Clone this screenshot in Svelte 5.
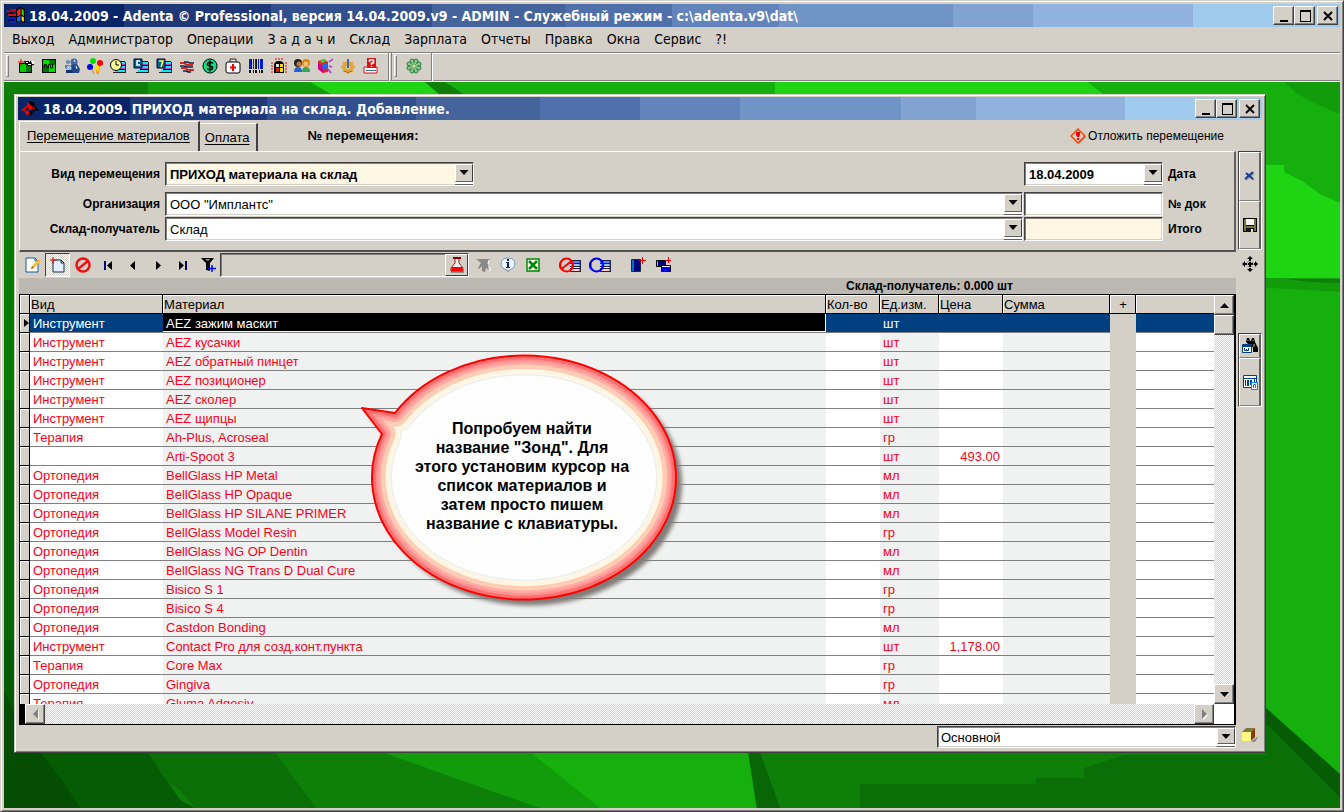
<script>
  const menu = ['Выход', 'Администратор', 'Операции', 'З а д а ч и', 'Склад', 'Зарплата', 'Отчеты', 'Правка', 'Окна', 'Сервис', '?!'];

  const list = '<path d="M7 3h8v12H7z" fill="#008"/><path d="M7 4h8v2H7zM7 8h8v2H7zM5 12h10v2H5z" fill="#0ee"/><path d="M7 6h8v1H7zM7 10h8v1H7z" fill="#c3c"/><path d="M3 14h12v1H3zM15 4h1v11h-1z" fill="#222"/>';
  const sheet = '<path d="M8 3h8v12H8z" fill="#224"/><path d="M8 4h7v2H8z" fill="#58f"/><path d="M8 7h7v2H8z" fill="#9cf"/><path d="M8 10h7v1H8z" fill="#fff"/><path d="M8 12h7v2H8z" fill="#fcc"/>';

  const icons = {
    flag: '<path d="M8 2l4-2 4 2v12l-4-2-4 2z" fill="#000"/><path d="M9 3l3-2v6l-3 1z" fill="#f22"/><path d="M13 1l2 2v5l-2-1z" fill="#2c2"/><path d="M9 9l3-1v4l-3 1z" fill="#26f"/><path d="M13 8l2 1v4l-2-1z" fill="#fd0"/><path d="M0 3h2v2H0zM3 2h5v2H3zM1 6h7v2H1z" fill="#c11"/><path d="M0 9h8v2H0zM2 12h6v2H2z" fill="#12c"/><path d="M0 5h6v1H0zM2 8h6v1H2zM1 11h6v1H1z" fill="#000"/>',
    adenta: '<path d="M0 9l5-4 1-3 3 2 3 4-3 1-2-1-1 2 2 1-2 3-2-2-1-2z" fill="#e00"/><path d="M7 1l5 1v3l4 4-5 1-2 4-2-1 1-3 3-1 1-2-4-3z" fill="#000"/><path d="M11 5l2 2-2 2-2-1z" fill="#900"/><path d="M3 9l3-3 1 1-2 3z" fill="#400"/>',
    green: '<path d="M1 5h13v10H1z" fill="#070"/><path d="M2 6h6v8H2z" fill="#0c0"/><path d="M6 3h10v4l-5 1-4-2z" fill="#000"/><path d="M8 4h2v1H8zM10 5h3v2h-3zM13 3h3v3h-2zM11 3h1v1h-1z" fill="#fff"/><path d="M3 1v7M0 4h6" stroke="#f00"/><path d="M1.500 5.500h12v9h-12z" fill="none" stroke="#000"/>',
    chart: '<path d="M1 1h14v14H1z" fill="#000"/><path d="M2 2h12v12H2z" fill="#070"/><path d="M2 2h6v5H2zM8 7h6v7H8z" fill="#0d0"/><path d="M3.500 10V6.500h2V10h2V6.500h2V10h2V6" stroke="#020" fill="none"/>',
    people: '<circle cx="10" cy="4" r="3.500" fill="#46a"/><path d="M7 7l6-1 3 5-1 4H7z" fill="#248"/><circle cx="4" cy="4" r="2" fill="#68b"/><path d="M1 7h5l2 4-3 1-4-2z" fill="#57a"/><circle cx="5" cy="10" r="2.500" fill="#9bd"/><path d="M2 12h6l1 3H2z" fill="#136"/><path d="M10 2l1 2M12 8l1 3M4 9l1 1" stroke="#dff"/>',
    balloons: '<path d="M9 8l1 8M5 11l2 5M13 8l-2 8" stroke="#e80" fill="none"/><circle cx="6" cy="3" r="3" fill="#0d0"/><circle cx="13" cy="5" r="3" fill="#f00"/><circle cx="3" cy="9" r="3" fill="#00e"/><circle cx="10" cy="10" r="2.500" fill="#fd0"/>',
    clock: list + '<circle cx="6" cy="7" r="5.500" fill="#ff9" stroke="#000"/><path d="M6 3v4h3" fill="none" stroke="#000"/>',
    tableC: list + '<path d="M1 1h8v9H1z" fill="#068" stroke="#003"/><path d="M7 3H4v4h3" fill="none" stroke="#fff" stroke-width="1.500"/>',
    table7: list + '<path d="M1 1h8v9H1z" fill="#068" stroke="#003"/><path d="M3 3h4L5 9" fill="none" stroke="#ff5" stroke-width="1.500"/>',
    flow: '<path d="M1 5h4l3 2h6M2 10h4l3 2h6" fill="none" stroke="#d22" stroke-width="2"/><path d="M5 4h3l3 1h4M1 8h4l3 1h6M4 13h3l2 1h3" fill="none" stroke="#124" stroke-width="1.500"/>',
    dollar: '<circle cx="8" cy="8" r="7" fill="#1d8" stroke="#000"/><path d="M11 5.500Q8 3 6 5t2 3 2 3-5-.5M8 2.500v11" fill="none" stroke="#000" stroke-width="1.500"/>',
    medical: '<path d="M5 4V1h6v3" fill="none" stroke="#333"/><rect x="1" y="4" width="14" height="11" rx="2" fill="#fff" stroke="#000"/><path d="M8 6v7M5 9.500h6" stroke="#e00" stroke-width="2"/>',
    barcode: '<path d="M1 1h3v10H1zM5 1h1v10H5zM7 1h2v10H7zM10 1h1v10h-1zM12 1h3v10h-3z" fill="#02c"/><path d="M3 1h1v10H3zM8 1h1v10H8zM13 1h1v10h-1zM1 12h2v3H1zM5 12h1v3H5zM7 12h2v3H7zM11 12h1v3h-1zM13 12h2v3h-2z" fill="#111"/>',
    window: '<path d="M3 15V7q0-4 5-4t5 4v8z" fill="#000"/><path d="M5 6h3v3H5z" fill="#ddd"/><path d="M9 6h3v3H9z" fill="#fd0"/><path d="M5 10h3v4H5z" fill="#c20"/><path d="M9 10h3v4H9z" fill="#fd0"/><path d="M1 4v11M15 4v11M4 1h8" stroke="#e00" stroke-dasharray="2 1"/>',
    users: '<circle cx="4" cy="5" r="4" fill="#222"/><circle cx="5" cy="6" r="2.500" fill="#b74"/><path d="M0 14q0-5 4-5t4 5z" fill="#26c"/><circle cx="12" cy="5" r="4" fill="#d80"/><circle cx="12" cy="6" r="2.500" fill="#fb7"/><path d="M8 14q0-5 4-5t4 5z" fill="#3a5"/>',
    cube: '<path d="M1 3l6-2 4 3v10l-5 1-5-4z" fill="#e22"/><path d="M1 5l5 3v7l-5-4z" fill="#c08"/><path d="M5 7l6-3v6l-5 2z" fill="#26e"/><path d="M3 3l4-2 2 2-4 2z" fill="#3d3"/><path d="M12 4l4-3M12 8l3 1M11 11l3 4" stroke="#a3d" stroke-width="1.500"/>',
    gear: '<circle cx="8" cy="9" r="4.500" fill="none" stroke="#e2a83c" stroke-width="3"/><path d="M8 2v14M1 9h14M3 4l10 10M13 4L3 14" stroke="#e2a83c" stroke-width="2"/><circle cx="8" cy="9" r="2" fill="#d4d0c8"/><path d="M8 1v9" stroke="#46a" stroke-width="2"/><path d="M4 13q4 3 8 0" fill="none" stroke="#a67018"/>',
    help: '<path d="M1 9h13v6H1z" fill="#fff" stroke="#d11"/><path d="M4 0h9v10H4z" fill="#d11"/><path d="M6.500 4V2h4v3h-2v2M8.500 8v1" fill="none" stroke="#fff" stroke-width="1.500"/><path d="M3 12.500h10" stroke="#36a"/>',
    flower: '<g fill="#8dcc8d" stroke="#2d7a45"><circle cx="6" cy="3" r="2"/><circle cx="10" cy="3" r="2"/><circle cx="13" cy="6" r="2"/><circle cx="13" cy="10" r="2"/><circle cx="10" cy="13" r="2"/><circle cx="6" cy="13" r="2"/><circle cx="3" cy="10" r="2"/><circle cx="3" cy="6" r="2"/></g><circle cx="8" cy="8" r="4" fill="#8dcc8d"/><path d="M4 4l8 8M12 4l-8 8M8 2v12M2 8h12" stroke="#2d7a45" stroke-width=".6"/><circle cx="8" cy="8" r="1.500" fill="#dd8"/>',
    edit: '<path d="M1 1h9l3 3v11H1z" fill="#fff" stroke="#135a9a"/><path d="M10 1v3h3" fill="none" stroke="#135a9a"/><path d="M6 12l1-3 7-7 2 2-7 7z" fill="#fb3"/><path d="M6 12l1-3 2 2z" fill="#a62"/>',
    add: '<path d="M3 3h8l3 3v9H3z" fill="#e4f0ff" stroke="#035"/><path d="M11 3v3h3" fill="none" stroke="#035"/><path d="M3 0v7M0 3h7" stroke="#e00"/>',
    ban: '<circle cx="8" cy="8" r="6.500" fill="none" stroke="#e11" stroke-width="2.500"/><path d="M13 4L3 12" stroke="#e11" stroke-width="2.500"/>',
    first: '<path d="M4 4h2v9H4z" fill="#000080"/><path d="M12 4v9L7 8.500z" fill="#000"/>',
    prev: '<path d="M10 4v9L5 8.500z" fill="#000"/>',
    next: '<path d="M6 4v9l5-4.500z" fill="#000"/>',
    last: '<path d="M10 4h2v9h-2z" fill="#000080"/><path d="M4 4v9l5-4.500z" fill="#000"/>',
    filter: '<path d="M1 1h13l-4 5v8l-4-1V6z" fill="#000"/><path d="M5 2h5L8 4z" fill="#999"/><path d="M12 8v7M8 11.500h8" stroke="#00f" stroke-width="1.500"/>',
    flask: '<path d="M6 2v4l-4 5v3h12v-3l-4-5V2" fill="#eee" stroke="#822"/><path d="M3 10h10l1 4H2z" fill="#f00"/><path d="M2 15h13" stroke="#555"/><path d="M4 0h8v2H4z" fill="#800"/>',
    nofilter: '<path d="M1 2h14l-2 3v5l1 3-3-2-1 4-3-1V9l-3 3-1-1 3-5z" fill="#888"/><path d="M14 3l-1 4M15 10v4" stroke="#fff"/>',
    info: '<path d="M8 1q7 0 7 6 0 4-5 6l-2 2v-2Q1 12 1 7q0-6 7-6z" fill="#eaf5ff" stroke="#79b"/><path d="M7 2h2v2H7zM6 5h3v5h1v1H6v-1h1V6H6z" fill="#126"/>',
    excel: '<path d="M2 2h12v12H2z" fill="#fff" stroke="#080" stroke-width="1.500"/><path d="M4 4l8 8M12 4l-8 8" stroke="#080" stroke-width="2.500"/>',
    box: '<path d="M1.500 2.500h9v12h-9z" fill="#000080" stroke="#224"/><path d="M3 3v11" stroke="#0df"/><path d="M12.500 0v7M9 3.500h7" stroke="#e00"/>',
    boxes: '<path d="M1.500 3.500h9v6h-9z" fill="#000080" stroke="#000"/><path d="M2.500 4v5" stroke="#0df"/><path d="M6.500 8.500h9v6h-9z" fill="#00f" stroke="#000"/><path d="M7 9.500h8" stroke="#fff"/><path d="M13.500 0v6M10 3.500h6" stroke="#e00"/>',
    delay: '<path d="M8 1l8 8-7 7z" fill="#888"/><path d="M8 1l7 7-7 7-7-7z" fill="#d4d0c8" stroke="#f40" stroke-width="1.500"/><path d="M6 4h4v3l-1 2H7L6 7zM7 10h2v2H7z" fill="#f00"/>',
    close: '<path d="M5 6l7 6M12 5l-8 7" stroke="#999" stroke-width="2"/><path d="M4 5l7 6M11 4l-8 7" stroke="#1c3c90" stroke-width="2"/>',
    save: '<path d="M1 1h14v14H1z" fill="#000"/><path d="M2 2h2v12H2zM12 2h2v12h-2zM3 9h10v2H3z" fill="#77723c"/><path d="M4 2h8v6H4z" fill="#f4f4f4"/><path d="M5 11h7v4H5z" fill="#111"/><path d="M9 12h2v3H9z" fill="#ddd"/>',
    move: '<path d="M8 0l3 3H5zM8 16l3-3H5zM0 8l3-3v6zM16 8l-3-3v6z" fill="#000"/><path d="M8 3v10M3 8h10" stroke="#000" stroke-width="2" stroke-dasharray="2 1"/><circle cx="8" cy="8" r="3" fill="none" stroke="#555" stroke-dasharray="1 1"/><path d="M7 7h2v2H7z" fill="#000"/>',
    find: '<path d="M4 4l1-4h2l1 3h1l1-3h2l1 4 3 6v4h-5V9H9z" fill="#000"/><path d="M6 2v1M11 2v1M12 6v3" stroke="#bbb"/><path d="M.5 6.500h9v8h-9z" fill="#fff" stroke="#004080"/><path d="M0 8h10" stroke="#004080" stroke-width="2"/><path d="M2.500 10v2.500h2V11v1.500h2V10" fill="none" stroke="#004080"/>',
    grid: '<path d="M1.500 1.500h13v12h-13z" fill="#fff" stroke="#004080"/><path d="M1 4h14v1H1zM3 6h1v6H3zM5 6h2v6H5zM8 6h2v5H8zM12 5h1v3h-1z" fill="#004080"/><path d="M9.500 8.500h6v7h-6z" fill="#fff" stroke="#08f"/><path d="M11.500 14v-3.500h2V14" fill="none" stroke="#08f"/>',
    brick: '<path d="M9 15l6-5h1l-3 5z" fill="#888"/><path d="M0 5l4-4h9l-4 4z" fill="#7c7a3c"/><path d="M0 5h9v9H0z" fill="#fff880"/><path d="M9 5l4-4v9l-4 4z" fill="#843c00"/>',
    banlist: sheet + '<ellipse cx="5.500" cy="8" rx="4.700" ry="6.500" fill="none" stroke="#f00" stroke-width="1.800"/><path d="M9 4l-7 8" stroke="#f00" stroke-width="1.800"/>',
    ringlist: sheet + '<ellipse cx="5.500" cy="8" rx="4.700" ry="6.500" fill="none" stroke="#00f" stroke-width="1.800"/>',
    min: '<path d="M4 12h8v2H4z" fill="#000"/>',
    max: '<path d="M3 2h11v12H3zM4 4v9h9V4z" fill="#000" fill-rule="evenodd"/>',
    cross: '<path d="M4 4l8 8M12 4l-8 8" stroke="#000" stroke-width="2"/>'
  };

  const mainTools = [
    ['green', 'Настройки'], ['chart', 'График'], ['people', 'Пациенты'], ['balloons', 'Дни рождения'],
    ['clock', 'Расписание'], ['tableC', 'Смены'], ['table7', 'Неделя'], ['flow', 'Потоки'],
    ['dollar', 'Оплата'], ['medical', 'Лечение'], ['barcode', 'Штрихкод'], ['window', 'Касса'],
    ['users', 'Сотрудники'], ['cube', 'Склад'], ['gear', 'Сервис'], ['help', 'Справка']
  ];

  const k = 'Инструмент', o = 'Ортопедия', t = 'Терапия';
  const rows = [
    [k, 'AEZ зажим маскит', 'шт', ''], [k, 'AEZ кусачки', 'шт', ''], [k, 'AEZ обратный пинцет', 'шт', ''],
    [k, 'AEZ позиционер', 'шт', ''], [k, 'AEZ сколер', 'шт', ''], [k, 'AEZ щипцы', 'шт', ''],
    [t, 'Ah-Plus, Acroseal', 'гр', ''], ['', 'Arti-Spoot 3', 'шт', '493.00'], [o, 'BellGlass HP Metal', 'мл', ''],
    [o, 'BellGlass HP Opaque', 'мл', ''], [o, 'BellGlass HP SILANE PRIMER', 'мл', ''], [o, 'BellGlass Model Resin', 'гр', ''],
    [o, 'BellGlass NG OP Dentin', 'мл', ''], [o, 'BellGlass NG Trans D Dual Cure', 'мл', ''], [o, 'Bisico S 1', 'гр', ''],
    [o, 'Bisico S 4', 'гр', ''], [o, 'Castdon Bonding', 'мл', ''], [k, 'Contact Pro для созд.конт.пункта', 'шт', '1,178.00'],
    [t, 'Core Max', 'гр', ''], [o, 'Gingiva', 'гр', ''], [t, 'Gluma Adgesiv', 'мл', '']
  ];
  let selected = $state(0);

  const bubble = 'M35 71A152 122 0 1 1 22 92L2 66Z';
</script>

{#snippet icon(name, wide)}
  <svg class="icon" class:wide viewBox="0 0 16 16" preserveAspectRatio="none" aria-hidden="true">{@html icons[name]}</svg>
{/snippet}

{#snippet caption()}
  <div class="caption-buttons">
    <button aria-label="Свернуть">{@render icon('min')}</button>
    <button aria-label="Развернуть">{@render icon('max')}</button>
    <button class="apart" aria-label="Закрыть">{@render icon('cross')}</button>
  </div>
{/snippet}

<div class="app">
  <header class="titlebar">
    {@render icon('flag')}
    <h1>18.04.2009 - Adenta © Professional, версия 14.04.2009.v9 - ADMIN - Служебный режим - c:\adenta.v9\dat\</h1>
    {@render caption()}
  </header>

  <nav class="menu">
    {#each menu as item}<button>{item}</button>{/each}
  </nav>

  <div class="rebar">
    <div class="band">
      <i class="grip"></i>
      {#each mainTools as [name, label]}
        <button aria-label={label}>{@render icon(name)}</button>
      {/each}
    </div>
    <div class="band small">
      <i class="grip"></i>
      <button aria-label="Adenta">{@render icon('flower')}</button>
    </div>
  </div>

  <main class="desktop">
    <svg class="wallpaper" viewBox="4 82 1336 726" preserveAspectRatio="none" aria-hidden="true">
      <path d="M4 82H1340V808H4z" fill="#0e7f08" />
      <path d="M148 82H310L332 95H148z" fill="#129c0c" />
      <path d="M310 82H425L445 95H332z" fill="#1fd412" />
      <path d="M425 82H445L465 95H440z" fill="#0e7f08" />
      <path d="M445 82H790V95H465z" fill="#16b00e" />
      <path d="M775 82H1088L1105 95H775z" fill="#1fd412" />
      <path d="M1088 82H1340V300H1266V95H1105z" fill="#16b00e" />
      <path d="M1284 82H1340V114L1318 105 1296 93z" fill="#129c0c" />
      <path d="M1266 165H1284V172L1302 181 1320 194 1340 203V279H1266z" fill="#1fd412" />
      <path d="M1266 278H1340V292L1300 290 1266 288z" fill="#129c0c" />
      <path d="M1285 279L1340 279V283L1310 282z" fill="#0e7f08" />
      <path d="M1266 288L1340 292V575L1340 575V576L1266 528z" fill="#16b00e" />
      <path d="M1266 288L1340 292V775L1266 709z" fill="#16b00e" />
      <path d="M1266 708L1340 774V798L1266 724z" fill="#065c03" />
      <path d="M4 120H14V400H4z" fill="#067a04" />
      <path d="M4 400H14V640H4z" fill="#086604" />
      <path d="M4 640H14V752H150L164 776 180 800 195 808H4z" fill="#065c03" />
      <path d="M4 690L14 712V752H40L62 780 80 808H4z" fill="#044d03" />
      <path d="M148 752H275L292 776 316 808H195L180 790 164 778z" fill="#0a6f06" />
      <path d="M382 752H750L758 808H540L460 780z" fill="#129c0c" />
      <path d="M530 752H748L756 808H600z" fill="#16b00e" />
      <path d="M748 752H760L780 808H757z" fill="#086604" />
      <path d="M860 808V784H1036V778H1084V768L1124 755H1266V724L1340 798V808z" fill="#0a6f06" />
    </svg>

    <section class="child">
      <header class="titlebar">
        {@render icon('adenta')}
        <h2>18.04.2009. ПРИХОД материала на склад. Добавление.</h2>
        {@render caption()}
      </header>

      <div class="body">
        <div class="work">
          <div class="tabs">
            <button class="tab active">Перемещение материалов</button>
            <button class="tab">Оплата</button>
            <strong>№ перемещения:</strong>
            <button class="delay">{@render icon('delay')}Отложить перемещение</button>
          </div>

          <form class="panel">
            <label for="kind">Вид перемещения</label>
            <div class="field kind cream"><select id="kind" class="bold"><option>ПРИХОД материала на склад</option></select><i class="drop"></i></div>
            <div class="field date"><select id="date" class="bold"><option>18.04.2009</option></select><i class="drop"></i></div>
            <label class="after" for="date">Дата</label>

            <label for="org">Организация</label>
            <div class="field"><select id="org"><option>ООО "Имплантс"</option></select><i class="drop"></i></div>
            <div class="field"><input id="doc" /></div>
            <label class="after" for="doc">№ док</label>

            <label for="store">Склад-получатель</label>
            <div class="field"><select id="store"><option>Склад</option></select><i class="drop"></i></div>
            <div class="field cream"><input id="total" /></div>
            <label class="after" for="total">Итого</label>
          </form>

          <div class="tools">
            <button aria-label="Изменить">{@render icon('edit')}</button>
            <button class="pressed" aria-label="Добавить">{@render icon('add')}</button>
            <button aria-label="Отменить">{@render icon('ban')}</button>
            <button aria-label="Первая">{@render icon('first')}</button>
            <button aria-label="Предыдущая">{@render icon('prev')}</button>
            <button aria-label="Следующая">{@render icon('next')}</button>
            <button aria-label="Последняя">{@render icon('last')}</button>
            <button aria-label="Фильтр">{@render icon('filter')}</button>
            <div class="search">
              <input aria-label="Поиск" />
              <button aria-label="Найти">{@render icon('flask')}</button>
            </div>
            <button aria-label="Снять фильтр">{@render icon('nofilter')}</button>
            <button aria-label="Сведения">{@render icon('info')}</button>
            <button aria-label="Excel">{@render icon('excel')}</button>
            <button class="group" aria-label="Исключить">{@render icon('banlist', true)}</button>
            <button class="large" aria-label="Включить">{@render icon('ringlist', true)}</button>
            <button class="group small" aria-label="Новая карточка">{@render icon('box')}</button>
            <button aria-label="Копия карточки">{@render icon('boxes')}</button>
          </div>

          <div class="balance">Склад-получатель: 0.000 шт</div>

          <div class="grid">
            <div class="view">
              <table>
                <thead>
                  <tr>
                    <th class="mark"></th><th class="type">Вид</th><th>Материал</th><th class="qty">Кол-во</th>
                    <th class="unit">Ед.изм.</th><th class="price">Цена</th><th class="sum">Сумма</th><th class="plus">+</th><th class="rest"></th>
                  </tr>
                </thead>
                <tbody>
                  {#each rows as [type, name, unit, price], i}
                    <tr class:selected={selected === i} onclick={() => (selected = i)}>
                      <td class="mark"></td><td>{type}</td><td class="shade name">{name}</td><td></td>
                      <td class="shade">{unit}</td><td class="num">{price}</td><td class="shade"></td><td class="plus"></td><td></td>
                    </tr>
                  {/each}
                </tbody>
              </table>
            </div>
            <div class="vscroll">
              <button aria-label="Вверх"><svg viewBox="0 0 9 5"><path d="M0 5L4.500 0 9 5z" /></svg></button>
              <i class="thumb"></i>
              <button class="end" aria-label="Вниз"><svg viewBox="0 0 9 5"><path d="M0 0h9L4.500 5z" /></svg></button>
            </div>
            <div class="hscroll">
              <button aria-label="Влево"><svg class="side" viewBox="0 0 5 10"><path d="M5 0v10L0 5z" /></svg></button>
              <button class="end" aria-label="Вправо"><svg class="side" viewBox="0 0 5 10"><path d="M0 0v10l5-5z" /></svg></button>
            </div>
            <div class="corner"></div>
          </div>

          <div class="foot">
            <div class="field"><select aria-label="Вид таблицы"><option>Основной</option></select><i class="drop"></i></div>
          </div>
        </div>

        <aside>
          <div class="stack actions">
            <button aria-label="Закрыть">{@render icon('close')}</button>
            <button aria-label="Сохранить">{@render icon('save')}</button>
          </div>
          <button class="bare" aria-label="Переместить">{@render icon('move')}</button>
          <div class="stack lookup">
            <button aria-label="Найти">{@render icon('find')}</button>
            <button aria-label="Таблица">{@render icon('grid')}</button>
          </div>
          <button class="bare bottom" aria-label="Материал">{@render icon('brick')}</button>
        </aside>
      </div>

      <div class="callout">
        <svg viewBox="0 0 330 264" aria-hidden="true">
          <defs>
            <clipPath id="bubble-shape"><path d={bubble} /></clipPath>
            <filter id="bubble-shadow"><feGaussianBlur stdDeviation="2" /></filter>
          </defs>
          <path d={bubble} transform="translate(6 6)" fill="#807c78" filter="url(#bubble-shadow)" />
          <g clip-path="url(#bubble-shape)" fill="none" stroke-linejoin="round">
            <path d={bubble} fill="#fefefe" />
            <path d={bubble} stroke="#edf0f0" stroke-width="40" />
            <path d={bubble} stroke="#fff6e4" stroke-width="37" />
            <path d={bubble} stroke="#ffccb4" stroke-width="27" />
            <path d={bubble} stroke="#ffaaa4" stroke-width="18" />
            <path d={bubble} stroke="#ff9492" stroke-width="13" />
            <path d={bubble} stroke="#ff7070" stroke-width="8" />
          </g>
          <path d={bubble} fill="none" stroke="#f00" stroke-width="2" stroke-linejoin="round" />
        </svg>
        <p>Попробуем найти<br />название "Зонд". Для<br />этого установим курсор на<br />список материалов и<br />затем просто пишем<br />название с клавиатуры.</p>
      </div>
    </section>
  </main>
</div>

<style>
  :global(body) { margin: 0; background: #d4d0c8; }
  * { box-sizing: border-box; }
  h1, h2, p { margin: 0; }
  button, input, select { font: inherit; color: inherit; margin: 0; padding: 0; border: 0; border-radius: 0; background: none; outline: none; }
  .app {
    min-height: 100vh; display: flex; flex-direction: column; background: #d4d0c8; color: #000;
    border: 1px solid; border-color: #d4d0c8 #404040 #404040 #d4d0c8;
    box-shadow: inset 1px 1px #fff, inset -1px -1px #808080; padding: 3px;
    font-family: "Liberation Sans", Arial, sans-serif; font-size: 13px;
  }
  .icon { display: block; flex: none; width: 16px; height: 16px; }
  .icon.wide { width: 22px; }

  .titlebar {
    display: flex; align-items: center; gap: 4px; height: 23px; padding: 0 2px 0 3px; color: #fff;
    background: linear-gradient(90deg, #0a2468 9%, #1e3878 9% 20%, #32508e 20% 32%, #46649c 32% 42%, #5070ac 42% 50%, #6284ba 50% 58%, #7094c6 58% 71%, #82a2d2 71% 77%, #92b2de 77% 89%, #a0caee 89%);
  }
  h1, h2 { flex: 1; min-width: 0; overflow: hidden; white-space: nowrap; font: bold 14px/20px "DejaVu Sans Condensed", "DejaVu Sans", sans-serif; }
  .titlebar > .icon { width: 18px; height: 18px; }
  .caption-buttons { display: flex; }
  .caption-buttons button, .vscroll button, .hscroll button, .thumb {
    display: grid; place-items: center; background: #d4d0c8; border: 1px solid; border-color: #fff #404040 #404040 #fff;
    box-shadow: inset -1px -1px #808080;
  }
  .caption-buttons button { width: 21px; height: 19px; }
  .caption-buttons .apart { margin-left: 2px; }

  .menu { display: flex; height: 25px; padding: 0 1px; font: 14px/24px "DejaVu Sans Condensed", "DejaVu Sans", sans-serif; }
  .menu button { height: 24px; padding: 0 7px; white-space: nowrap; }
  .rebar { display: flex; height: 30px; border-top: 1px solid #808080; border-bottom: 1px solid #fff; box-shadow: inset 0 1px #fff, inset 0 -1px #808080; }
  .band { display: flex; align-items: center; padding: 0 6px 2px 2px; border-right: 1px solid #808080; box-shadow: 1px 0 #fff; }
  .band button { width: 23px; height: 24px; display: grid; place-items: center; }
  .grip { width: 3px; height: 22px; margin-right: 5px; border: 1px solid; border-color: #fff #808080 #808080 #fff; }
  .band.small { margin-left: 2px; border-left: 1px solid #808080; }

  .desktop { position: relative; flex: 1; padding: 12px 74px 0 10px; background: #0e7f08; overflow: hidden; }
  .wallpaper { position: absolute; inset: 0; width: 100%; height: 100%; }
  .child {
    position: relative; padding: 2px 3px 3px; background: #d4d0c8; border: 1px solid; border-color: #d4d0c8 #404040 #404040 #d4d0c8;
    box-shadow: inset 1px 1px #fff, inset -1px -1px #808080;
  }
  .body { display: flex; gap: 2px; padding-left: 1px; }
  .work { flex: 1; min-width: 0; }

  .tabs { display: flex; align-items: flex-end; height: 31px; }
  .tab { height: 28px; padding: 0 6px 0 5px; line-height: 26px; border-top: 1px solid #fff; border-right: 2px solid #404040; text-decoration: underline; text-underline-offset: 2px; }
  .tab.active { height: 30px; padding: 0 8px 2px 7px; border-left: 1px solid #fff; border-top-left-radius: 2px; }
  .tabs strong { align-self: center; margin-left: 50px; }
  .delay { display: flex; align-items: center; align-self: center; gap: 2px; margin-left: auto; margin-right: 12px; font-size: 12px; }

  .panel {
    display: grid; grid-template-columns: 141px 1fr 140px 70px; grid-template-rows: 30px 25px 25px; align-items: start;
    padding: 10px 0 8px; border: solid; border-width: 1px 2px 2px 1px; border-color: #fff #606060 #505050 #fff;
  }
  label { font-weight: bold; font-size: 12px; line-height: 24px; text-align: right; padding-right: 1px; white-space: nowrap; }
  label.after { text-align: left; padding-left: 4px; }
  .field { display: flex; height: 24px; padding: 1px 0 0 1px; background: #fff; border: 1px solid; border-color: #404040 #fff #fff #404040; box-shadow: inset 1px 1px #808080, inset -1px -1px #d4d0c8; }
  .panel > .field { margin-left: 4px; margin-right: 1px; }
  .panel > .field + .field { margin-left: 0; }
  .panel > .kind { width: 309px; }
  .field.cream { background: #fff6e4; }
  .field select, .field input { flex: 1; min-width: 0; width: 100%; appearance: none; padding-left: 3px; }
  .field .bold { font-weight: bold; }
  .drop { position: relative; flex: none; width: 18px; height: 18px; align-self: flex-start; background: #d4d0c8; border: 1px solid; border-color: #fff #404040 #606060 #fff; box-shadow: 0 2px #fff, 0 3px #606060; pointer-events: none; }
  .drop::after { content: ""; display: block; margin: 5px auto; width: 9px; height: 5px; background: #000; clip-path: polygon(0 0, 100% 0, 50% 100%); }

  .tools { display: flex; align-items: center; height: 26px; padding-left: 1px; }
  .tools > button { width: 25px; height: 24px; display: grid; place-items: center; }
  .tools > .pressed, .vscroll, .hscroll { background: repeating-conic-gradient(#fff 0 25%, #d4d0c8 0 50%) 0 0 / 2px 2px; }
  .tools > .pressed { border: 1px solid; border-color: #404040 #fff #fff #404040; }
  .search { display: flex; width: 249px; height: 24px; margin-right: 1px; border: 1px solid; border-color: #404040 #fff #fff #404040; box-shadow: inset 1px 1px #808080; }
  .search input { flex: 1; min-width: 0; padding: 0 4px; }
  .search button { width: 23px; display: grid; place-items: center; border: 1px solid; border-color: #fff #404040 #404040 #fff; }
  .tools > .large { width: 30px; }
  .tools > .group { width: 30px; margin-left: 10px; }
  .tools > .group.small { width: 25px; }

  .balance { height: 16px; padding-right: 223px; background: #bcb9b2; text-align: right; font-weight: bold; font-size: 12px; line-height: 16px; }

  .grid { display: grid; grid-template-columns: 1fr 20px; grid-template-rows: 409px 20px; border: 1px solid #000; border-right-width: 2px; background: #000; }
  .view { overflow: hidden; background: #fff; }
  table { width: 100%; table-layout: fixed; border-collapse: separate; border-spacing: 0; }
  th, td { height: 19px; padding: 0 0 0 3px; overflow: hidden; white-space: nowrap; line-height: 17px; text-align: left; font-weight: normal; }
  th { padding-left: 1px; background: #d4d0c8; border-right: 1px solid #000; border-bottom: 1px solid #000; box-shadow: inset 1px 1px #fff; }
  td { border-bottom: 1px solid #808080; color: #ff0018; }
  th.mark { width: 10px; }
  th.type { width: 133px; }
  th.qty { width: 54px; }
  th.unit { width: 59px; }
  th.price { width: 64px; }
  th.sum { width: 107px; }
  th.plus { width: 26px; text-align: center; }
  th.rest { width: 78px; border-right: 0; }
  td.mark { padding: 0; background: #d4d0c8; border-right: 1px solid #000; border-bottom-color: #000; box-shadow: inset 1px 1px #fff; }
  td.shade { background: #f0f2f2; }
  td.plus, .selected td.plus { background: #d4d0c8; border-bottom-color: #d4d0c8; }
  td.num { text-align: right; padding-right: 3px; }
  .selected td { background: #004080; color: #fff; }
  .selected td.name { background: #000; box-shadow: inset -1px -1px #fff8e8; }
  .selected td.mark { background: #d4d0c8; }
  .selected td.mark::before { content: ""; display: block; width: 5px; height: 8px; margin-left: 4px; background: #000; clip-path: polygon(0 0, 100% 50%, 0 100%); }
  .vscroll { display: flex; flex-direction: column; }
  .vscroll button, .thumb { width: 20px; height: 20px; flex: none; }
  .vscroll .end { margin-top: auto; }
  .grid svg { width: 9px; height: 5px; fill: #000; }
  .grid svg.side { width: 5px; height: 10px; fill: #808080; filter: drop-shadow(1px 1px #fff); }
  .hscroll { display: flex; justify-content: space-between; margin-left: 5px; }
  .hscroll button { width: 20px; height: 20px; }
  .corner { background: #fff; }

  .foot { display: flex; justify-content: flex-end; height: 24px; padding-top: 1px; }
  .foot .field { width: 299px; height: 22px; }
  .foot .field select { padding-left: 2px; }
  .foot .drop { height: 16px; }

  aside { width: 24px; display: flex; flex-direction: column; align-items: center; padding-top: 31px; }
  .stack { width: 24px; display: flex; flex-direction: column; border: 1px solid; border-color: #404040 #fff #fff #404040; }
  .stack button { flex: 1; display: grid; place-items: center; border: 1px solid; border-color: #fff #606060 #808080 #fff; border-right-width: 2px; }
  .actions { height: 99px; }
  .bare { display: grid; place-items: center; width: 24px; height: 28px; }
  .lookup { height: 74px; margin-top: 55px; }
  .lookup button:first-child { flex: 0 0 24px; }
  .bottom { margin-top: auto; }

  .callout { position: absolute; left: 345px; top: 247px; width: 330px; height: 264px; pointer-events: none; }
  .callout svg { position: absolute; inset: 0; width: 330px; height: 264px; overflow: visible; }
  .callout p { position: relative; padding: 77px 6px 0 0; text-align: center; font-weight: bold; font-size: 16px; line-height: 19px; }
</style>
